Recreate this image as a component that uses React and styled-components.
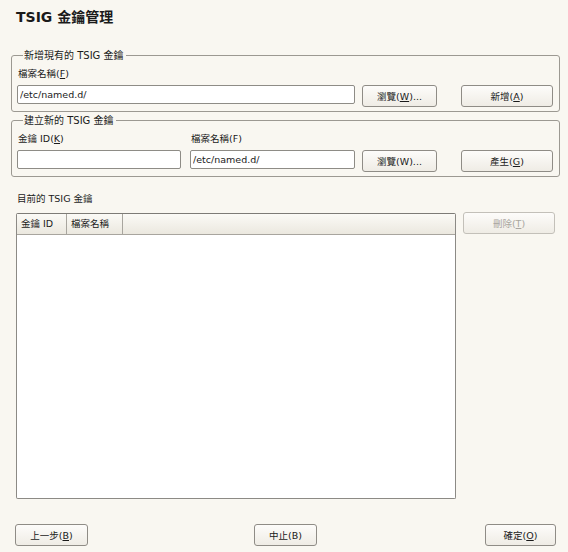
import React from 'react';
import styled, { createGlobalStyle } from 'styled-components';

const GlobalStyle = createGlobalStyle`
  html, body {
    margin: 0;
    padding: 0;
    background: #f9f7f1;
  }
  body {
    font-family: "DejaVu Sans", "Noto Sans CJK TC", sans-serif;
    font-size: 9.5px;
    color: #1a1a1a;
  }
  * { box-sizing: border-box; }
`;

const Page = styled.div`
  width: 568px;
  height: 552px;
  display: flex;
  flex-direction: column;
  padding: 0 8px 6px 11px;
`;

const Title = styled.h1`
  margin: 8px 0 0 5px;
  font-size: 14px;
  line-height: 18px;
  font-weight: bold;
`;

const Group = styled.fieldset`
  margin: ${p => p.$top}px 0 0 0;
  padding: 0 5px 4px 5px;
  border: 1px solid #9c9992;
  border-radius: 3px;
  min-width: 0;
`;

const Legend = styled.legend`
  margin-left: 6px;
  padding: 0 2px 0 1px;
  font-size: 10px;
  line-height: 13px;
`;

const Label = styled.div`
  line-height: 14px;
  margin: 5px 0 4px 1px;
  white-space: nowrap;
`;

const Row = styled.div`
  display: flex;
  align-items: flex-start;
`;

const Column = styled.div`
  display: flex;
  flex-direction: column;
  align-items: flex-start;
  width: ${p => (p.$w ? `${p.$w}px` : 'auto')};
  margin-left: ${p => p.$gap || 0}px;
`;

const Input = styled.input`
  width: ${p => (p.$w ? `${p.$w}px` : '100%')};
  height: 19px;
  margin: 0;
  padding: 0 2px;
  border: 1px solid #8e8c86;
  border-radius: 2px;
  background: #fff;
  font-family: inherit;
  font-size: 9.5px;
  color: #1a1a1a;
  outline: none;
`;

const Button = styled.button`
  width: ${p => p.$w}px;
  height: 22px;
  margin-left: ${p => p.$ml || 0}px;
  flex-shrink: 0;
  padding: 0;
  border: 1px solid ${p => (p.disabled ? '#c3c0b9' : '#8f8c86')};
  border-radius: 3px;
  background: linear-gradient(#fdfcfa, #efece5);
  font-family: inherit;
  font-size: 9.5px;
  color: ${p => (p.disabled ? '#a9a6a0' : '#1a1a1a')};
  u { text-decoration-thickness: 1px; text-underline-offset: 1px; }
`;

const SectionLabel = styled.div`
  margin: 15px 0 0 6px;
  line-height: 14px;
`;

const ListArea = styled.div`
  flex: 1;
  display: flex;
  align-items: flex-start;
  margin: 7px 0 0 5px;
  min-height: 0;
`;

const Table = styled.div`
  width: 440px;
  height: 286px;
  border: 1px solid #8c8a85;
  border-top-color: #7d7b76;
  border-radius: 2px;
  background: #fff;
  display: flex;
  flex-direction: column;
`;

const HeaderRow = styled.div`
  display: flex;
  height: 21px;
  background: linear-gradient(#fbfaf6, #ebe8df);
  border-bottom: 1px solid #a8a59e;
`;

const HeaderCell = styled.div`
  width: ${p => (p.$w ? `${p.$w}px` : 'auto')};
  flex: ${p => (p.$w ? 'none' : 1)};
  padding-left: 4px;
  line-height: 20px;
  border-right: ${p => (p.$w ? '1px solid #a8a59e' : 'none')};
  white-space: nowrap;
`;

const Footer = styled.div`
  display: grid;
  grid-template-columns: 1fr auto 1fr;
  align-items: center;
  margin: 27px 4px 0 4px;
  & > :last-child { justify-self: end; }
`;

export default function App() {
  return (
    <>
      <GlobalStyle />
      <Page>
        <Title>TSIG 金鑰管理</Title>

        <Group $top={23}>
          <Legend>新增現有的 TSIG 金鑰</Legend>
          <Label>檔案名稱(<u>F</u>)</Label>
          <Row>
            <Input $w={338} defaultValue="/etc/named.d/" />
            <Button $w={75} $ml={7}>瀏覽(<u>W</u>)...</Button>
            <Button $w={92} $ml={24}>新增(<u>A</u>)</Button>
          </Row>
        </Group>

        <Group $top={2}>
          <Legend>建立新的 TSIG 金鑰</Legend>
          <Row>
            <Column $w={164}>
              <Label>金鑰 ID(<u>K</u>)</Label>
              <Input />
            </Column>
            <Column $w={165} $gap={9}>
              <Label>檔案名稱(F)</Label>
              <Input defaultValue="/etc/named.d/" />
            </Column>
            <Column $gap={7}>
              <Label>&nbsp;</Label>
              <Button $w={75}>瀏覽(W)...</Button>
            </Column>
            <Column $gap={24}>
              <Label>&nbsp;</Label>
              <Button $w={92}>產生(<u>G</u>)</Button>
            </Column>
          </Row>
        </Group>

        <SectionLabel>目前的 TSIG 金鑰</SectionLabel>
        <ListArea>
          <Table>
            <HeaderRow>
              <HeaderCell $w={50}>金鑰 ID</HeaderCell>
              <HeaderCell $w={56}>檔案名稱</HeaderCell>
              <HeaderCell />
            </HeaderRow>
          </Table>
          <Button $w={92} $ml={7} disabled style={{ marginTop: -1 }}>刪除(<u>T</u>)</Button>
        </ListArea>

        <Footer>
          <Button $w={73}>上一步(<u>B</u>)</Button>
          <Button $w={63}>中止(B)</Button>
          <Button $w={71}>確定(<u>O</u>)</Button>
        </Footer>
      </Page>
    </>
  );
}
